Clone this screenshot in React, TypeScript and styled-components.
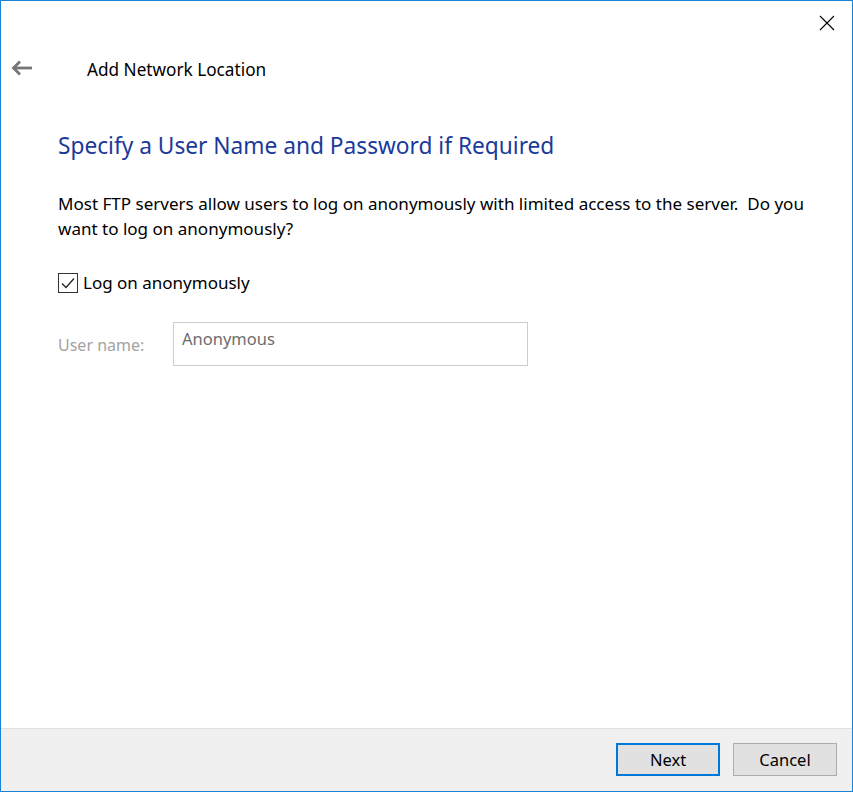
import React from "react";
import styled, { createGlobalStyle } from "styled-components";

const Global = createGlobalStyle`
  html, body { margin: 0; padding: 0; background: #ffffff; }
  body { font-family: "Noto Sans", "Open Sans", sans-serif; }
  * { box-sizing: border-box; }
`;

const Window = styled.div`
  width: 853px;
  height: 792px;
  border: 1px solid #1883d7;
  background: #ffffff;
  display: flex;
  flex-direction: column;
  font-family: "Noto Sans", "Open Sans", sans-serif;
  color: #000000;
`;

const TitleBar = styled.div`
  height: 44px;
  display: flex;
  justify-content: flex-end;
  align-items: flex-start;
`;

const CloseButton = styled.button`
  width: 46px;
  height: 44px;
  border: none;
  background: transparent;
  padding: 0;
  display: flex;
  align-items: center;
  justify-content: center;
  margin-right: 2px;
`;

const NavRow = styled.div`
  height: 50px;
  display: flex;
  align-items: center;
`;

const BackButton = styled.button`
  width: 42px;
  height: 30px;
  border: none;
  background: transparent;
  padding: 0 0 0 10px;
  display: flex;
  align-items: center;
  margin: -4px 44px 0 0;
`;

const WizardTitle = styled.div`
  font-size: 17.2px;
  color: #000000;
  margin-top: -1px;
`;

const Content = styled.div`
  flex: 1;
  padding: 35px 30px 0 57px;
  display: flex;
  flex-direction: column;
`;

const Heading = styled.h1`
  margin: 0;
  font-weight: 400;
  font-size: 22.7px;
  color: #1b3a9a;
  line-height: 32px;
`;

const Description = styled.p`
  margin: 29px 0 0 0;
  font-size: 17.05px;
  line-height: 25px;
  max-width: 760px;
`;

const CheckRow = styled.label`
  display: flex;
  align-items: center;
  margin-top: 30px;
  gap: 5px;
  font-size: 17px;
`;

const CheckBox = styled.span`
  width: 20px;
  height: 20px;
  border: 1px solid #333333;
  background: #ffffff;
  display: flex;
  align-items: center;
  justify-content: center;
`;

const FieldRow = styled.div`
  display: flex;
  align-items: center;
  margin-top: 28px;
`;

const FieldLabel = styled.span`
  width: 115px;
  font-size: 16px;
  color: #a3a3a3;
  padding-top: 1px;
`;

const TextBox = styled.div`
  width: 355px;
  height: 44px;
  border: 1px solid #cccccc;
  padding: 4px 8px;
  font-size: 16.5px;
  color: #6d6d6d;
`;

const Footer = styled.div`
  height: 63px;
  border-top: 1px solid #dfdfdf;
  background: #f0f0f0;
  display: flex;
  justify-content: flex-end;
  align-items: flex-start;
  padding: 14px 15px 0 0;
  gap: 13px;
`;

const DialogButton = styled.button<{ $primary?: boolean }>`
  width: 104px;
  height: 33px;
  background: #e1e1e1;
  border: ${(p) => (p.$primary ? "2px solid #0078d7" : "1px solid #adadad")};
  font-family: "Noto Sans", "Open Sans", sans-serif;
  font-size: 16.5px;
  color: #000000;
  padding: 0;
`;

export default function App() {
  return (
    <>
      <Global />
      <Window>
        <TitleBar>
          <CloseButton aria-label="Close">
            <svg width="16" height="16" viewBox="0 0 16 16">
              <path d="M1 1 L15 15 M15 1 L1 15" stroke="#000" strokeWidth="1.1" fill="none" />
            </svg>
          </CloseButton>
        </TitleBar>
        <NavRow>
          <BackButton aria-label="Back">
            <svg width="22" height="16" viewBox="0 0 22 16">
              <path d="M2.5 8 H21" stroke="#767676" strokeWidth="2.8" fill="none" />
              <path d="M9 1.5 L2.5 8 L9 14.5" stroke="#767676" strokeWidth="2.8" fill="none" />
            </svg>
          </BackButton>
          <WizardTitle>Add Network Location</WizardTitle>
        </NavRow>
        <Content>
          <Heading>Specify a User Name and Password if Required</Heading>
          <Description>
            Most FTP servers allow users to log on anonymously with limited access to the server.&nbsp; Do you
            want to log on anonymously?
          </Description>
          <CheckRow>
            <CheckBox>
              <svg width="14" height="12" viewBox="0 0 14 12">
                <path d="M1 6.5 L5 10.5 L13 1.5" stroke="#222" strokeWidth="1.3" fill="none" />
              </svg>
            </CheckBox>
            Log on anonymously
          </CheckRow>
          <FieldRow>
            <FieldLabel>User name:</FieldLabel>
            <TextBox>Anonymous</TextBox>
          </FieldRow>
        </Content>
        <Footer>
          <DialogButton $primary>Next</DialogButton>
          <DialogButton>Cancel</DialogButton>
        </Footer>
      </Window>
    </>
  );
}
